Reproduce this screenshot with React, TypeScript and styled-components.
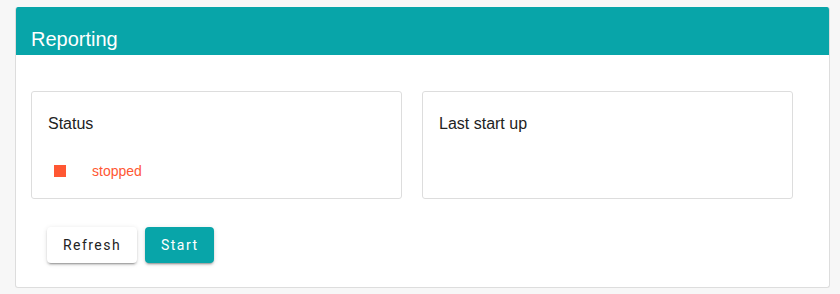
import React from 'react';
import styled, { createGlobalStyle } from 'styled-components';

const colors = {
    teal: '#08a5a9',
    page: '#f7f7f7',
    border: '#dddddd',
    text: '#222222',
    stopped: '#ff5733',
    white: '#ffffff',
};

const GlobalStyle = createGlobalStyle`
    html, body {
        margin: 0;
        padding: 0;
        background: ${colors.page};
        font-family: 'Liberation Sans', Arial, sans-serif;
    }
`;

export default function App() {
    return <Page>
        <GlobalStyle />
        <Panel>
            <PanelHeader>
                <Title>Reporting</Title>
            </PanelHeader>
            <PanelBody>
                <CardsRow>
                    <Card>
                        <CardTitle>Status</CardTitle>
                        <StatusLine>
                            <StatusSquare />
                            <StatusText>stopped</StatusText>
                        </StatusLine>
                    </Card>
                    <Card>
                        <CardTitle>Last start up</CardTitle>
                    </Card>
                </CardsRow>
                <ButtonsRow>
                    <Button>Refresh</Button>
                    <Button primary>Start</Button>
                </ButtonsRow>
            </PanelBody>
        </Panel>
    </Page>
}

const Page = styled.div`
    padding: 7px 11px 6px 15px;
`;

const Panel = styled.div`
    width: 815px;
    box-sizing: border-box;
    background: ${colors.white};
    border: 1px solid ${colors.border};
    border-top: none;
    border-radius: 3px;
    overflow: hidden;
`;

const PanelHeader = styled.div`
    height: 48px;
    background: ${colors.teal};
    padding: 0 15px;
    display: flex;
    align-items: flex-end;
`;

const Title = styled.h1`
    margin: 0 0 4px;
    font-size: 20px;
    font-weight: 400;
    color: ${colors.white};
    line-height: 24px;
`;

const PanelBody = styled.div`
    padding: 36px 15px 24px;
`;

const CardsRow = styled.div`
    display: flex;
    gap: 20px;
`;

const Card = styled.div`
    width: 371px;
    height: 108px;
    box-sizing: border-box;
    border: 1px solid ${colors.border};
    border-radius: 3px;
    padding: 22px 16px 0;
`;

const CardTitle = styled.div`
    font-size: 16px;
    line-height: 20px;
    color: ${colors.text};
`;

const StatusLine = styled.div`
    display: flex;
    align-items: center;
    margin-top: 29px;
    padding-left: 6px;
`;

const StatusSquare = styled.span`
    width: 12px;
    height: 12px;
    background: ${colors.stopped};
    margin-right: 26px;
`;

const StatusText = styled.span`
    font-size: 14px;
    color: ${colors.stopped};
`;

const ButtonsRow = styled.div`
    display: flex;
    gap: 8px;
    margin-top: 28px;
    padding-left: 16px;
`;

const Button = styled.button<{ primary?: boolean }>`
    height: 36px;
    padding: 0 16px;
    border: none;
    border-radius: 4px;
    font-family: Roboto, 'Liberation Sans', sans-serif;
    font-size: 14px;
    font-weight: 400;
    letter-spacing: 1.45px;
    cursor: pointer;
    background: ${({ primary }) => primary ? colors.teal : colors.white};
    color: ${({ primary }) => primary ? colors.white : colors.text};
    box-shadow: 0 3px 1px -2px rgba(0,0,0,0.2), 0 2px 2px 0 rgba(0,0,0,0.14), 0 1px 5px 0 rgba(0,0,0,0.12);
`;
